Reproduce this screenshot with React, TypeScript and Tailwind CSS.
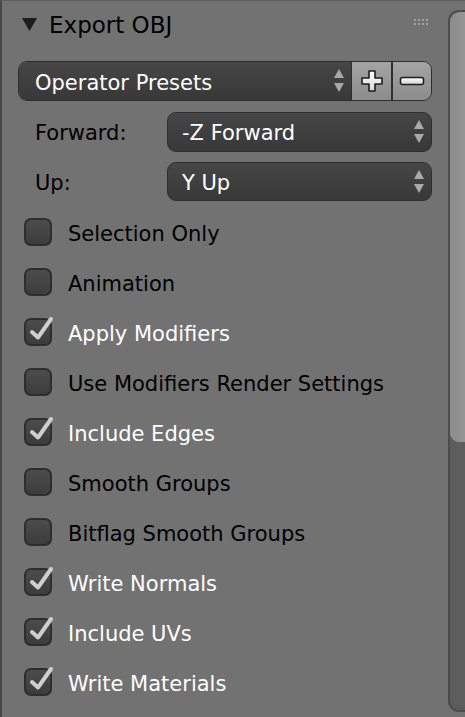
import React from "react";

const font = { fontFamily: '"DejaVu Sans", "Liberation Sans", sans-serif' };

function Arrows() {
  return (
    <svg width="12" height="26" viewBox="0 0 12 26" className="shrink-0">
      <polygon points="6,1 11,10 1,10" fill="#a9a9a9" />
      <polygon points="1,15 11,15 6,24" fill="#a9a9a9" />
    </svg>
  );
}

function Check({ checked }: { checked: boolean }) {
  return (
    <div className="relative w-[28px] h-[28px] shrink-0">
      <div className="absolute inset-0 rounded-[7px] border-2 border-[#2e2e2e] bg-gradient-to-b from-[#4c4c4c] to-[#3c3c3c]" />
      {checked && (
        <svg className="absolute left-0 top-[-2px]" width="32" height="32" viewBox="0 0 32 32">
          <polyline points="8,16 14,21.5 27,3" fill="none" stroke="#cfcfcf" strokeWidth="4" strokeLinecap="round" strokeLinejoin="round" />
        </svg>
      )}
    </div>
  );
}

const items: [string, boolean][] = [
  ["Selection Only", false],
  ["Animation", false],
  ["Apply Modifiers", true],
  ["Use Modifiers Render Settings", false],
  ["Include Edges", true],
  ["Smooth Groups", false],
  ["Bitflag Smooth Groups", false],
  ["Write Normals", true],
  ["Include UVs", true],
  ["Write Materials", true],
];

export default function App() {
  return (
    <div style={font} className="w-[465px] h-[717px] bg-[#727272] flex overflow-hidden border-t border-[#5f5f5f] border-l-2 border-l-[#474747]">
      <div className="w-[446px] shrink-0 flex flex-col">
        {/* header */}
        <div className="h-[45px] flex items-center pl-[20px] pr-[18px] pt-[4px]">
          <svg width="15" height="15" viewBox="0 0 15 15" className="mr-[12px] mt-[-2px]">
            <polygon points="0,1 15,1 7.5,14" fill="#1c1c1c" />
          </svg>
          <span className="text-[23px] text-black leading-none">Export OBJ</span>
          <div className="flex-1" />
          <svg width="16" height="7" viewBox="0 0 16 7" className="mt-[-6px]">
            {[0, 4, 8, 12].map((x) => (
              <g key={x}>
                <rect x={x} y="0" width="2" height="2" fill="#a0a0a0" />
                <rect x={x} y="4" width="2" height="2" fill="#a0a0a0" />
              </g>
            ))}
          </svg>
        </div>

        {/* operator presets */}
        <div className="mt-[15px] ml-[16px] w-[414px] h-[40px] flex rounded-[9px] border border-[#2e2e2e] overflow-hidden">
          <div className="flex-1 flex items-center bg-gradient-to-b from-[#464646] to-[#383838] pl-[16px] pr-[6px]">
            <span className="text-[21px] text-white flex-1 translate-y-[3px]">Operator Presets</span>
            <Arrows />
          </div>
          <div className="w-[40px] border-l border-[#2e2e2e] bg-gradient-to-b from-[#a4a4a4] to-[#8c8c8c] flex items-center justify-center">
            <svg width="24" height="24" viewBox="0 0 24 24">
              <defs>
                <linearGradient id="pg" x1="0" y1="0" x2="0" y2="1">
                  <stop offset="0" stopColor="#ffffff" />
                  <stop offset="1" stopColor="#d8d8d8" />
                </linearGradient>
              </defs>
              <polygon points="9,2 15,2 15,9 22,9 22,15 15,15 15,22 9,22 9,15 2,15 2,9 9,9" fill="url(#pg)" stroke="#1e1e1e" strokeWidth="1.6" strokeLinejoin="round" />
            </svg>
          </div>
          <div className="w-[40px] border-l-2 border-[#2e2e2e] bg-gradient-to-b from-[#a4a4a4] to-[#8c8c8c] flex items-center justify-center">
            <svg width="26" height="12" viewBox="0 0 26 12">
              <defs>
                <linearGradient id="mg" x1="0" y1="0" x2="0" y2="1">
                  <stop offset="0" stopColor="#ffffff" />
                  <stop offset="1" stopColor="#cfcfcf" />
                </linearGradient>
              </defs>
              <rect x="1.5" y="2.5" width="23" height="7" rx="2" fill="url(#mg)" stroke="#1e1e1e" strokeWidth="1.6" />
            </svg>
          </div>
        </div>

        {/* forward */}
        <div className="mt-[11px] flex items-center h-[40px]">
          <span className="w-[165px] pl-[33px] text-[21px] text-black translate-y-[2px]">Forward:</span>
          <div className="w-[265px] h-[40px] rounded-[9px] border border-[#2e2e2e] bg-gradient-to-b from-[#464646] to-[#383838] flex items-center pl-[14px] pr-[6px]">
            <span className="text-[21px] text-white flex-1 translate-y-[2px]">-Z Forward</span>
            <Arrows />
          </div>
        </div>

        {/* up */}
        <div className="mt-[10px] flex items-center h-[39px]">
          <span className="w-[165px] pl-[33px] text-[21px] text-black translate-y-[2px]">Up:</span>
          <div className="w-[265px] h-[39px] rounded-[9px] border border-[#2e2e2e] bg-gradient-to-b from-[#464646] to-[#383838] flex items-center pl-[14px] pr-[6px]">
            <span className="text-[21px] text-white flex-1 translate-y-[2px]">Y Up</span>
            <Arrows />
          </div>
        </div>

        {/* checkboxes */}
        <div className="mt-[8px] flex flex-col">
          {items.map(([label, checked]) => (
            <div key={label} className="h-[50px] flex items-center pl-[22px]">
              <div className="mt-[-4px]">
                <Check checked={checked} />
              </div>
              <span className={`ml-[16px] text-[21px] translate-y-[1px] ${checked ? "text-white" : "text-black"}`}>{label}</span>
            </div>
          ))}
        </div>
      </div>

      {/* scrollbar */}
      <div className="flex-1 pt-[9px] pb-[5px] flex">
        <div className="flex-1 rounded-l-[11px] border-2 border-r-0 border-[#4c4c4c] bg-[#5d5d5d] flex flex-col overflow-hidden">
          <div className="h-[430px] rounded-l-[9px] bg-gradient-to-r from-[#8c8c8c] to-[#959595]" />
        </div>
      </div>
    </div>
  );
}
